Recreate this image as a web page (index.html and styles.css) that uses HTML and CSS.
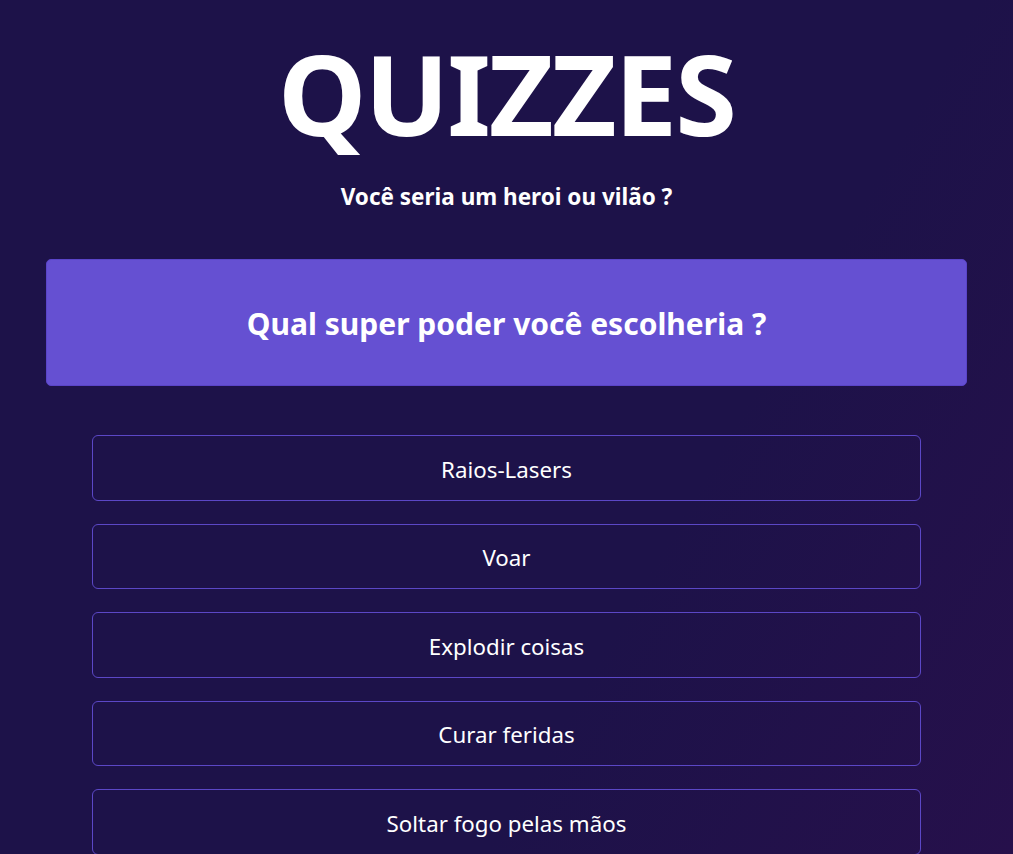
FILE: index.html
```html
<!DOCTYPE html>
<html lang="pt-BR">
<head>
<meta charset="utf-8">
<title>Quizzes</title>
<link rel="stylesheet" href="styles.css">
</head>
<body>
<main class="page">
  <header class="head">
    <h1 class="title">QUIZZES</h1>
    <p class="subtitle">Você seria um heroi ou vilão ?</p>
  </header>
  <section class="question">
    <h2 class="question-text">Qual super poder você escolheria ?</h2>
  </section>
  <ul class="options">
    <li class="option">Raios-Lasers</li>
    <li class="option">Voar</li>
    <li class="option">Explodir coisas</li>
    <li class="option">Curar feridas</li>
    <li class="option">Soltar fogo pelas mãos</li>
  </ul>
</main>
</body>
</html>
```
FILE: styles.css
```css
html, body {
  margin: 0;
  padding: 0;
  height: 100%;
}
body {
  background: linear-gradient(120deg, #1d1249 0%, #1d1249 65%, #26104b 100%);
  color: #ffffff;
  font-family: "Noto Sans", "Open Sans", sans-serif;
  overflow: hidden;
}
.page {
  display: flex;
  flex-direction: column;
  align-items: center;
  padding-top: 37px;
}
.head {
  display: flex;
  flex-direction: column;
  align-items: center;
}
.title {
  margin: 0;
  font-size: 112px;
  line-height: 112px;
  font-weight: 700;
  letter-spacing: -2px;
}
.subtitle {
  margin: 35px 0 0;
  font-size: 22.5px;
  line-height: 26px;
  font-weight: 700;
}
.question {
  box-sizing: border-box;
  width: 921px;
  height: 127px;
  margin-top: 49px;
  background: #6550d2;
  border: 1px solid #5a44c8;
  border-radius: 5px;
  display: flex;
  align-items: center;
  justify-content: center;
}
.question-text {
  margin: 0;
  padding-top: 2px;
  font-size: 30px;
  font-weight: 700;
}
.options {
  list-style: none;
  margin: 49px 0 0;
  padding: 0;
  width: 829px;
  display: flex;
  flex-direction: column;
  gap: 23px;
}
.option {
  box-sizing: border-box;
  height: 65.5px;
  padding-top: 3px;
  border: 1px solid #5b47c6;
  border-radius: 6px;
  display: flex;
  align-items: center;
  justify-content: center;
  font-size: 22.3px;
}
```
